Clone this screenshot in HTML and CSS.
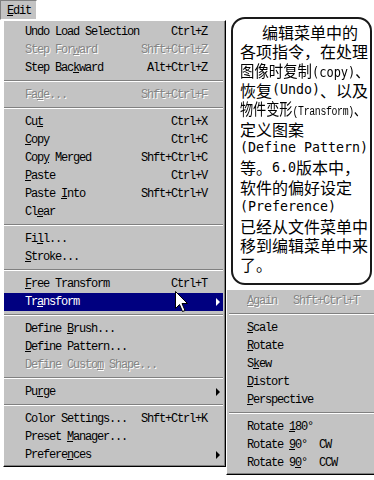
FILE: index.html
```html
<!DOCTYPE html>
<html>
<head>
<meta charset="utf-8">
<link rel="stylesheet" href="styles.css">
</head>
<body>
<div class="screen">
  <div class="left">
    <div class="menubar"><u>E</u>dit</div>
    <div class="menu">
      <div class="item"><span>Undo Load Selection</span><span class="key">Ctrl+Z</span></div>
      <div class="item dis"><span>Step For<u>w</u>ard</span><span class="key">Shft+Ctrl+Z</span></div>
      <div class="item"><span>Step Bac<u>k</u>ward</span><span class="key">Alt+Ctrl+Z</span></div>
      <div class="sep"></div>
      <div class="item dis"><span>Fa<u>d</u>e...</span><span class="key">Shft+Ctrl+F</span></div>
      <div class="sep"></div>
      <div class="item"><span>Cu<u>t</u></span><span class="key">Ctrl+X</span></div>
      <div class="item"><span><u>C</u>opy</span><span class="key">Ctrl+C</span></div>
      <div class="item"><span>Cop<u>y</u> Merged</span><span class="key">Shft+Ctrl+C</span></div>
      <div class="item"><span><u>P</u>aste</span><span class="key">Ctrl+V</span></div>
      <div class="item"><span>Paste <u>I</u>nto</span><span class="key">Shft+Ctrl+V</span></div>
      <div class="item"><span>Cl<u>e</u>ar</span></div>
      <div class="sep"></div>
      <div class="item"><span>Fi<u>l</u>l...</span></div>
      <div class="item"><span><u>S</u>troke...</span></div>
      <div class="sep"></div>
      <div class="item"><span><u>F</u>ree Transform</span><span class="key">Ctrl+T</span></div>
      <div class="item hl"><span>Tr<u>a</u>nsform</span><span class="arrow"></span>
        <svg class="cursor" width="13" height="22" viewBox="0 0 13 22"><path d="M0.5 0.5V17.5L4.5 13.5L7.5 20.5L10 19.5L7 12.5H12.5Z" fill="#fff" stroke="#000" stroke-linejoin="miter"/></svg>
      </div>
      <div class="sep"></div>
      <div class="item"><span>Define <u>B</u>rush...</span></div>
      <div class="item"><span><u>D</u>efine Pattern...</span></div>
      <div class="item dis"><span>Define Custo<u>m</u> Shape...</span></div>
      <div class="sep"></div>
      <div class="item"><span>Pu<u>r</u>ge</span><span class="arrow"></span></div>
      <div class="sep"></div>
      <div class="item"><span>Color Settings...</span><span class="key">Shft+Ctrl+K</span></div>
      <div class="item"><span>Preset <u>M</u>anager...</span></div>
      <div class="item"><span>Prefere<u>n</u>ces</span><span class="arrow"></span></div>
    </div>
  </div>
  <div class="right">
    <div class="callout">
      <div class="line first">编辑菜单中的</div>
      <div class="line">各项指令，在处理</div>
      <div class="line"><span class="squeeze s90">图像时复制<span class="en">(copy)</span>、</span></div>
      <div class="line">恢复<span class="en">(Undo)</span>、以及</div>
      <div class="line"><span class="squeeze s82">物件变形<span class="sm">(Transform)</span>、</span></div>
      <div class="line">定义图案</div>
      <div class="line"><span class="en">(Define Pattern)</span></div>
      <div class="line">等。<span class="en">6.0</span>版本中，</div>
      <div class="line">软件的偏好设定</div>
      <div class="line"><span class="en">(Preference)</span></div>
      <div class="line">已经从文件菜单中</div>
      <div class="line">移到编辑菜单中来</div>
      <div class="line">了。</div>
    </div>
    <div class="submenu">
      <div class="item dis"><span><u>A</u>gain</span><span class="key">Shft+Ctrl+T</span></div>
      <div class="sep"></div>
      <div class="item"><span><u>S</u>cale</span></div>
      <div class="item"><span><u>R</u>otate</span></div>
      <div class="item"><span>S<u>k</u>ew</span></div>
      <div class="item"><span><u>D</u>istort</span></div>
      <div class="item"><span><u>P</u>erspective</span></div>
      <div class="sep"></div>
      <div class="item"><span>Rotate <u>1</u>80°</span></div>
      <div class="item"><span>Rotate <u>9</u>0°  CW</span></div>
      <div class="item"><span>Rotate 9<u>0</u>°  CCW</span></div>
    </div>
  </div>
</div>
</body>
</html>
```

FILE: styles.css
```css
html, body {
  margin: 0;
  padding: 0;
  background: #fff;
}
body {
  width: 374px;
  height: 480px;
  overflow: hidden;
  font-family: "Liberation Mono", monospace;
  font-size: 12px;
  color: #000;
}
u {
  text-decoration: underline;
  text-underline-offset: 1px;
}
.screen {
  display: flex;
  align-items: flex-start;
  width: 376px;
}
.left {
  width: 226px;
  flex: none;
}
.menubar {
  width: 37px;
  height: 20px;
  box-sizing: border-box;
  background: #c3c3c3;
  border: 1px solid;
  border-color: #808080 #fff #fff #808080;
  padding: 4px 0 0 6px;
  line-height: 12px;
  letter-spacing: -1.2px;
}
.menu {
  margin-left: 3px;
  width: 223px;
  box-sizing: border-box;
  background: #c3c3c3;
  border-top: 1px solid #fff;
  border-left: 1px solid #fff;
  border-right: 1px solid #000;
  border-bottom: 1px solid #000;
  box-shadow: inset -1px -1px 0 #808080;
  padding: 2px 2px 2px 0;
}
.item {
  display: flex;
  align-items: center;
  height: 18px;
  padding: 0 16px 0 21px;
  letter-spacing: -1.2px;
  white-space: pre;
  position: relative;
}
.item .key {
  margin-left: auto;
}
.item .arrow {
  margin-left: auto;
  margin-right: -13px;
  width: 0;
  height: 0;
  border-left: 4px solid #000;
  border-top: 4px solid transparent;
  border-bottom: 4px solid transparent;
}
.sep {
  height: 9px;
  box-sizing: border-box;
  padding-top: 3px;
}
.sep::before {
  content: "";
  display: block;
  height: 1px;
  background: #808080;
  border-bottom: 1px solid #fff;
}
.hl {
  background: #000080;
  color: #fff;
}
.hl .arrow {
  border-left-color: #fff;
}
.dis {
  color: #858585;
  text-shadow: 1px 1px 0 #fff;
}
.cursor {
  position: absolute;
  left: 171px;
  top: -2px;
  z-index: 3;
}
.right {
  width: 150px;
  flex: none;
  padding-top: 17px;
}
.callout {
  margin-left: 5px;
  width: 141px;
  height: 268px;
  box-sizing: border-box;
  border: 2px solid #1a1a1a;
  border-radius: 14px;
  background: #fff;
  padding: 3px 0 0 7px;
  font-family: "Noto Sans CJK SC", sans-serif;
  font-size: 16px;
  white-space: nowrap;
  overflow: hidden;
}
.callout .line {
  display: flex;
  align-items: center;
  height: 19.4px;
  line-height: 1;
}
.callout .first {
  padding-left: 22px;
}
.callout .en {
  font-family: "DejaVu Sans Mono", monospace;
  font-size: 13.3px;
}
.callout .sm {
  font-family: "Liberation Mono", monospace;
  font-size: 12px;
  letter-spacing: -0.4px;
}
.callout .squeeze {
  display: inline-block;
  transform-origin: left center;
}
.callout .s90 {
  transform: scaleX(0.9);
}
.callout .s82 {
  transform: scaleX(0.82);
}
.submenu {
  margin-top: 4px;
  width: 150px;
  box-sizing: border-box;
  background: #c3c3c3;
  border-top: 1px solid #fff;
  border-left: 1px solid #fff;
  border-bottom: 1px solid #000;
  box-shadow: inset 0 -1px 0 #808080;
  padding: 2px 0 2px 2px;
}
.submenu .item {
  padding: 0 17px 0 18px;
}
```
